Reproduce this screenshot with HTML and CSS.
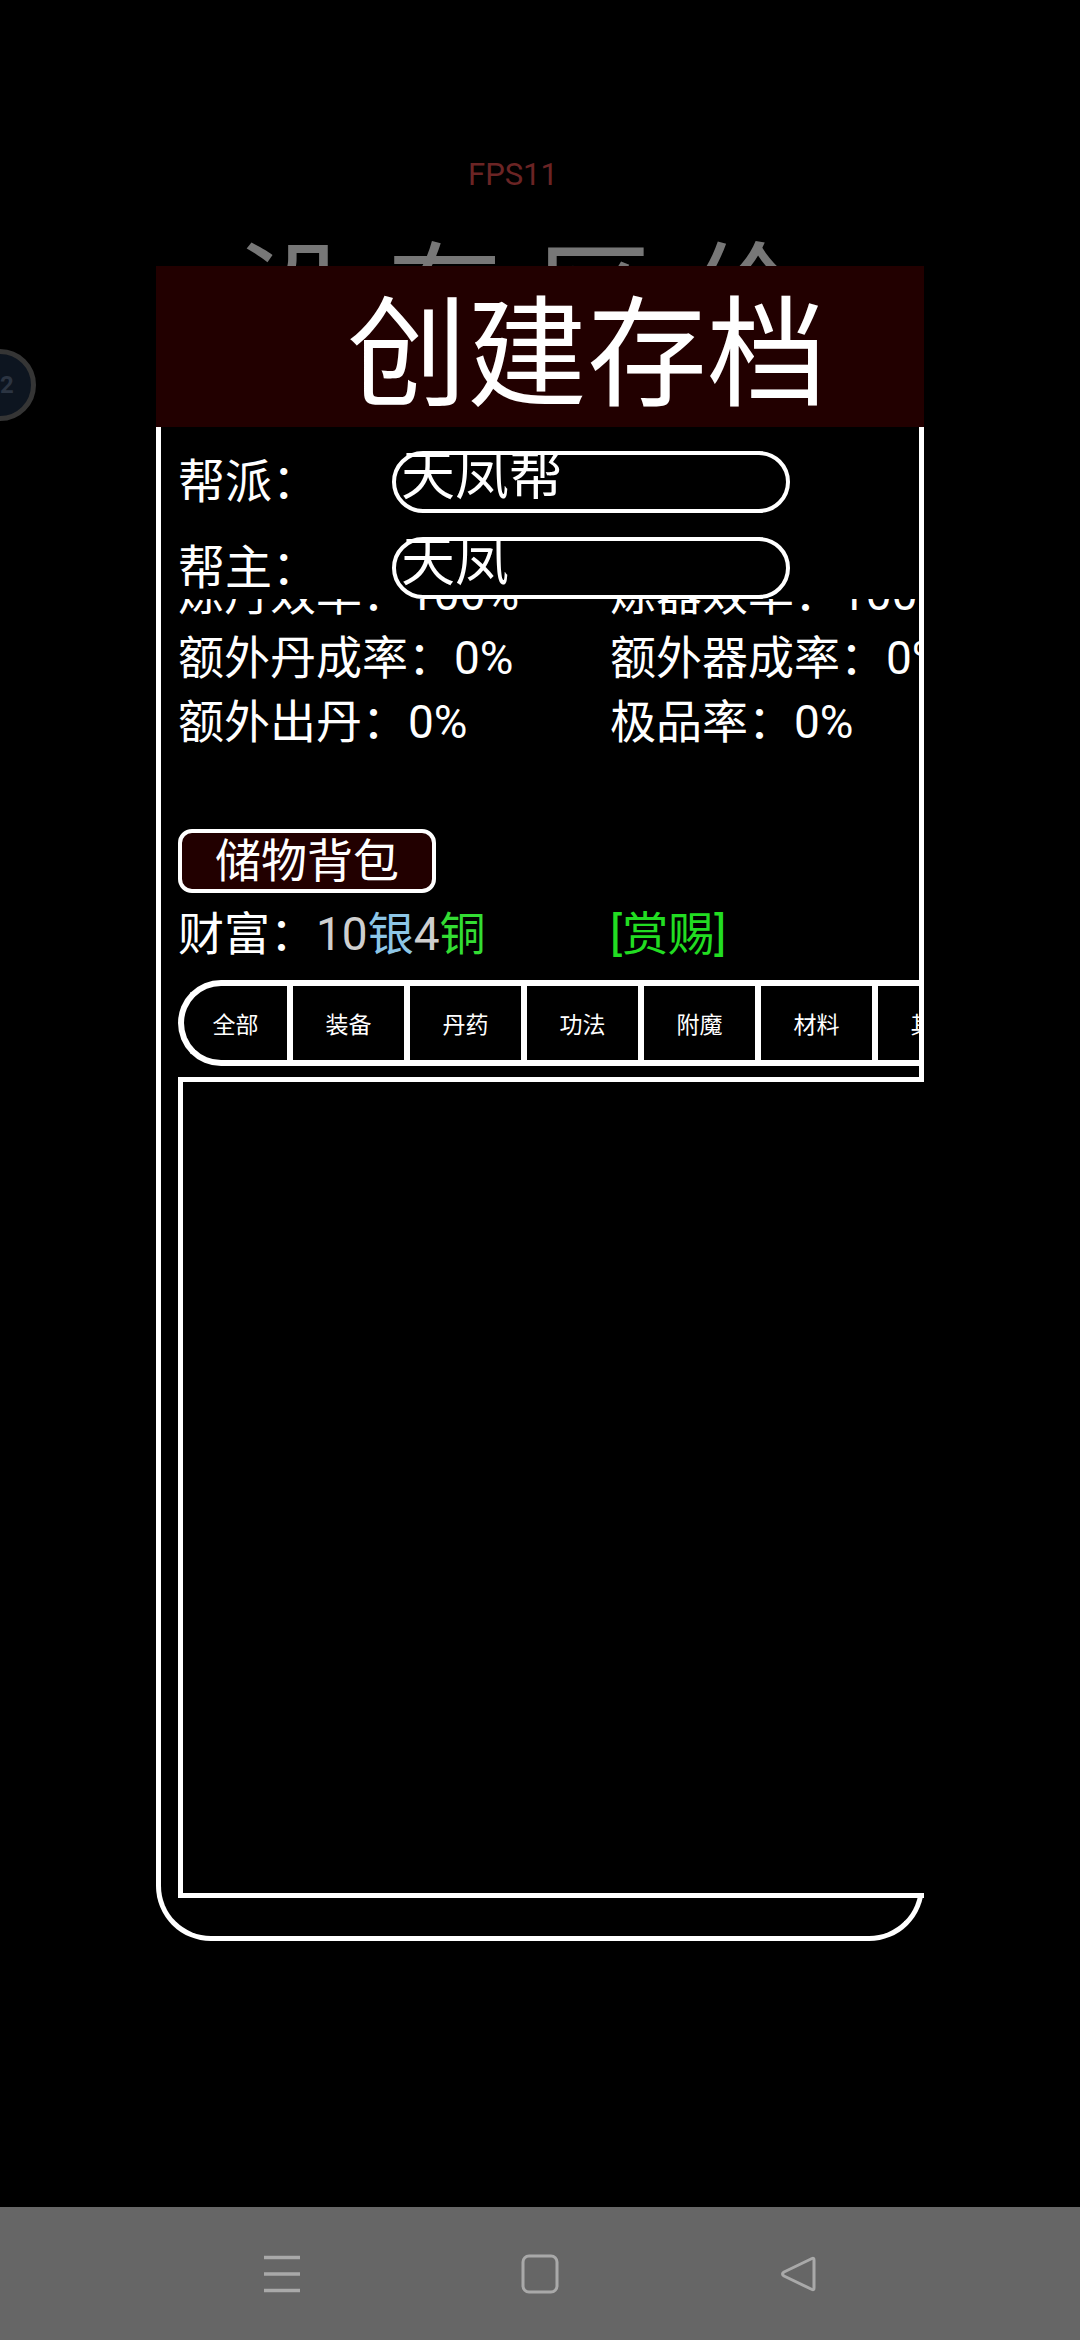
FILE: index.html
```html
<!DOCTYPE html>
<html lang="zh-CN">
<head>
  <meta charset="UTF-8">
  <meta name="viewport" content="width=device-width, initial-scale=1.0">
  <title>创建存档</title>
  <link rel="stylesheet" href="styles.css">
</head>
<body>
  <div class="screen">
    <div class="fps">FPS11</div>
    <div class="bg-title">没有区价</div>

    <!-- floating assist ball on the left edge -->
    <div class="float-ball">22</div>

    <div class="dialog">
      <div class="dialog-title">创建存档</div>
      <div class="dialog-body">
        <div class="top-section">
          <div class="field">
            <div class="field-label">帮派：</div>
            <div class="field-input">天凤帮</div>
          </div>
          <div class="field">
            <div class="field-label">帮主：</div>
            <div class="field-input">天凤</div>
          </div>

          <div class="stats">
            <div class="stats-list">
              <div class="stat-row"><span>炼丹效率：100%</span><span>炼器效率：100%</span></div>
              <div class="stat-row"><span>额外丹成率：0%</span><span>额外器成率：0%</span></div>
              <div class="stat-row"><span>额外出丹：0%</span><span>极品率：0%</span></div>
            </div>
          </div>

          <div class="bag-btn">储物背包</div>

          <div class="wealth">
            <span>财富：<span class="gray">10</span><span class="silver">银</span><span class="gray">4</span><span class="copper">铜</span></span>
            <span class="reward">[赏赐]</span>
          </div>

          <div class="tabs">
            <div class="tab">全部</div>
            <div class="tab">装备</div>
            <div class="tab">丹药</div>
            <div class="tab">功法</div>
            <div class="tab">附魔</div>
            <div class="tab">材料</div>
            <div class="tab">其他</div>
          </div>
        </div>

        <div class="bag-list"></div>
      </div>
    </div>

    <nav class="navbar">
      <svg class="nav-icon" viewBox="0 0 40 40">
        <path d="M2 3.5h36M2 20h36M2 36.5h36" stroke="#a9a9a9" stroke-width="3.5" fill="none"/>
      </svg>
      <svg class="nav-icon" viewBox="0 0 40 40">
        <rect x="3" y="2" width="34" height="36" rx="6" stroke="#a9a9a9" stroke-width="3" fill="none"/>
      </svg>
      <svg class="nav-icon" viewBox="0 0 40 40">
        <path d="M34 4.5 L6 18 Q3 20 6 22 L34 35.5 Q36 36.5 36 34 V6 Q36 3.5 34 4.5 Z" stroke="#a9a9a9" stroke-width="3" fill="none" stroke-linejoin="round"/>
      </svg>
    </nav>
  </div>
</body>
</html>
```

FILE: styles.css
```css
* {
  box-sizing: border-box;
}

body {
  margin: 0;
  background-color: #000;
  color: #fff;
  font-family: Roboto, "Noto Sans CJK SC", sans-serif;
}

.screen {
  position: relative;
  width: 1080px;
  height: 2340px;
  display: flex;
  flex-direction: column;
  overflow: hidden;
}

.fps {
  margin: 159px 0 0 468px;
  font-size: 31px;
  line-height: 31px;
  color: #6b2424;
}

/* big grey text sitting behind the dialog */
.bg-title {
  margin: 41px 0 0 237px;
  font-family: "Noto Sans CJK SC", sans-serif;
  font-size: 115px;
  line-height: 115px;
  letter-spacing: 35px;
  color: #777;
  white-space: nowrap;
}

.float-ball {
  position: absolute;
  left: -36px;
  top: 349px;
  width: 72px;
  height: 72px;
  border-radius: 50%;
  border: 5px solid #353535;
  background-color: #0d1520;
  color: #2b3442;
  font-size: 24px;
  font-weight: bold;
  display: flex;
  align-items: center;
  justify-content: center;
}

/* dialog */
.dialog {
  position: absolute;
  left: 156px;
  top: 266px;
  width: 768px;
  overflow: hidden;
}

.dialog-title {
  height: 161px;
  background-color: #220000;
  padding-left: 191px;
  font-family: "Noto Sans CJK SC", sans-serif;
  font-size: 120px;
  line-height: 158px;
  white-space: nowrap;
}

.dialog-body {
  border: 5px solid #fff;
  border-top: 0;
  border-radius: 0 0 55px 55px;
  padding: 24px 0 38px 17px;
}

.top-section {
  overflow: hidden;
}

.field {
  display: flex;
  align-items: center;
  height: 62px;
}

.field + .field {
  margin-top: 24px;
}

.field-label {
  width: 214px;
  font-size: 47px;
  line-height: 62px;
}

.field-input {
  width: 398px;
  height: 62px;
  border: 4px solid #fff;
  border-radius: 31px;
  padding-left: 5px;
  font-size: 54px;
  line-height: 44px;
  white-space: nowrap;
}

/* stats list, scrolled a bit under the inputs */
.stats {
  height: 160px;
  overflow: hidden;
}

.stats-list {
  margin-top: -37px;
}

.stat-row {
  display: grid;
  grid-template-columns: 432px max-content;
  font-size: 46px;
  line-height: 64px;
  white-space: nowrap;
}

.bag-btn {
  margin-top: 70px;
  width: 258px;
  height: 64px;
  border: 4px solid #fff;
  border-radius: 14px;
  background-color: #220000;
  font-size: 46px;
  line-height: 56px;
  text-align: center;
}

.wealth {
  margin-top: 11px;
  display: grid;
  grid-template-columns: 432px max-content;
  font-size: 46px;
  line-height: 60px;
  white-space: nowrap;
}

.gray {
  color: #cfcfcf;
}

.silver {
  color: #8dc6e6;
}

.copper {
  color: #33dd33;
}

.reward {
  color: #22dd22;
}

.tabs {
  margin-top: 16px;
  height: 86px;
  display: flex;
  border: 6px solid #fff;
  border-right: 0;
  border-radius: 43px 0 0 43px;
}

.tab {
  flex: none;
  width: 117px;
  border-left: 6px solid #fff;
  display: flex;
  align-items: center;
  justify-content: center;
  font-size: 23px;
}

.tab:first-child {
  width: 103px;
  border-left: 0;
}

/* item grid box, runs past the clipped right edge */
.bag-list {
  position: relative;
  margin-top: 11px;
  margin-right: -40px;
  height: 821px;
  border: 5px solid #fff;
  background-color: #000;
}

/* system nav bar */
.navbar {
  margin-top: auto;
  height: 133px;
  background-color: #666;
  display: flex;
  justify-content: center;
  align-items: center;
  gap: 218px;
}

.nav-icon {
  width: 40px;
  height: 40px;
}
```
